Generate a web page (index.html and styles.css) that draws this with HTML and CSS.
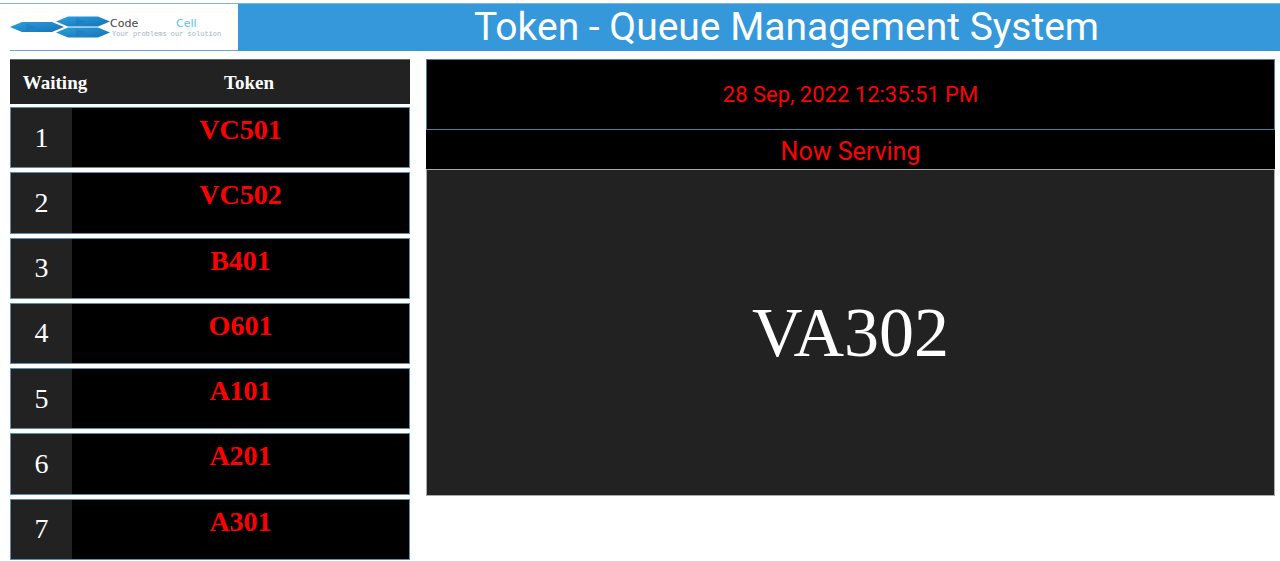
FILE: index.html
```html
<!DOCTYPE html>
<html lang="en">
<head>
<meta charset="utf-8">
<title>Token - Queue Management System</title>
<link rel="stylesheet" href="styles.css">
</head>
<body>
<header class="topbar">
  <div class="logo">
    <svg class="logo-mark" viewBox="0 0 100 22" aria-hidden="true">
      <defs>
        <linearGradient id="hex" x1="0" y1="0" x2="1" y2="1">
          <stop offset="0" stop-color="#2ba0dc"/>
          <stop offset="1" stop-color="#1672b8"/>
        </linearGradient>
      </defs>
      <path fill="url(#hex)" d="M0 11 12 6H42L54 11 42 16H12Z"/>
      <path fill="url(#hex)" d="M46 5.500 58 .5H88L100 5.500 88 10.500H58Z"/>
      <path fill="url(#hex)" d="M46 16.500 58 11.500H88L100 16.500 88 21.500H58Z"/>
      <path fill="#1269ae" opacity=".25" d="M16 7 26 11 16 15ZM66 2 76 5.500 66 9ZM66 12.500 76 16.500 66 20Z"/>
    </svg>
    <div class="logo-text">
      <span class="word-dark">Code</span><span class="word-blue">Cell</span>
      <span class="tagline">Your problems our solution</span>
    </div>
  </div>
  <h1 class="title">Token - Queue Management System</h1>
</header>
<main class="board">
  <table class="queue">
    <thead>
      <tr class="queue-head"><th scope="col">Waiting</th><th scope="col">Token</th></tr>
    </thead>
    <tbody class="queue-body">
      <tr class="queue-row"><td class="position">1</td><td class="token">VC501</td></tr>
      <tr class="queue-row"><td class="position">2</td><td class="token">VC502</td></tr>
      <tr class="queue-row"><td class="position">3</td><td class="token">B401</td></tr>
      <tr class="queue-row"><td class="position">4</td><td class="token">O601</td></tr>
      <tr class="queue-row"><td class="position">5</td><td class="token">A101</td></tr>
      <tr class="queue-row"><td class="position">6</td><td class="token">A201</td></tr>
      <tr class="queue-row"><td class="position">7</td><td class="token">A301</td></tr>
    </tbody>
  </table>
  <section class="serving">
    <time class="clock" datetime="2022-09-28T12:35:51">28 Sep, 2022 12:35:51 PM</time>
    <h2 class="serving-title">Now Serving</h2>
    <p class="current">VA302</p>
  </section>
</main>
</body>
</html>
```
FILE: styles.css
```css
* { box-sizing: border-box; }
body {
  margin: 0;
  padding-top: 3px;
  background: #fff;
  font-family: "Liberation Serif", serif;
}
.topbar {
  display: flex;
  padding-left: 10px;
  border-top: 1px solid #7db3da;
}
.logo {
  display: flex;
  align-items: center;
  width: 228px;
  border-bottom: 1px solid #6aa9d4;
}
.logo-mark { width: 100px; height: 22px; flex: none; }
.logo-text {
  display: grid;
  grid-template-columns: 66px 62px;
  font-family: "DejaVu Sans", sans-serif;
  font-size: 11px;
  line-height: 13px;
}
.word-dark { color: #444; }
.word-blue { color: #5cc3e8; }
.tagline {
  grid-column: 1 / -1;
  padding-left: 2px;
  color: #a3b4bd;
  font-family: "Liberation Mono", monospace;
  font-size: 7px;
  line-height: 8px;
  white-space: nowrap;
}
.title {
  flex: 1;
  margin: 0;
  padding-left: 55px;
  background: #3598db;
  color: #fff;
  font: 400 39px/47px Roboto, sans-serif;
  text-align: center;
}
.board {
  display: grid;
  grid-template-columns: 400px 1fr;
  gap: 16px;
  align-items: start;
  padding: 8px 5px 0 10px;
}
.queue, .queue thead { display: block; }
.queue th, .queue td { padding: 0; }
.queue-head {
  display: grid;
  grid-template-columns: 66px 1fr;
  align-items: center;
  height: 45px;
  margin-bottom: 3px;
  padding: 2px 0 0 12px;
  background: #222;
  color: #fff;
  border-top: 1px solid #666;
  font-size: 19px;
}
.queue-body {
  display: grid;
  grid-auto-rows: 1fr;
  gap: 4px;
  min-height: 453px;
}
.queue-row {
  display: grid;
  grid-template-columns: 61px 1fr;
  background: #000;
  border: 1px solid #5f8ca8;
  font-size: 28px;
  text-align: center;
}
.position {
  display: grid;
  place-items: center;
  background: #222;
  color: #fff;
}
.token {
  color: #f00;
  font-weight: 700;
  line-height: 44px;
}
.serving {
  display: flex;
  flex-direction: column;
  text-align: center;
}
.clock {
  padding: 20px 0;
  background: #000;
  border: 1px solid #4f7f9f;
  color: #f00;
  font: 22px/29px Roboto, sans-serif;
}
.serving-title {
  margin: 0;
  padding-top: 4px;
  background: #000;
  color: #f00;
  font: 400 25px/35px Roboto, sans-serif;
}
.current {
  margin: 0;
  background: #222;
  border: 1px solid #aaa;
  color: #fff;
  font-size: 70px;
  line-height: 325px;
}
```
